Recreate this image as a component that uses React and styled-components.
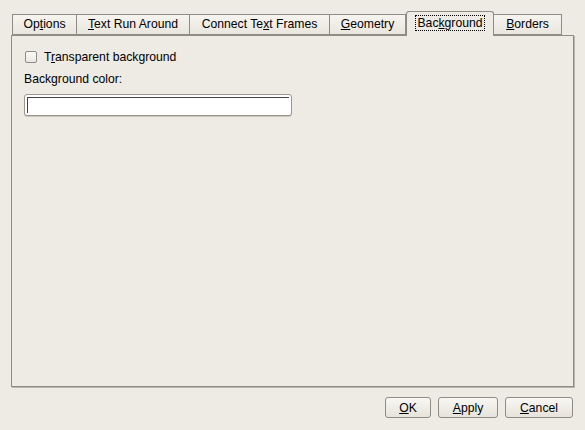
import React from 'react';
import styled, { createGlobalStyle } from 'styled-components';

const GlobalStyle = createGlobalStyle`
	html, body {
		margin: 0;
		padding: 0;
		background: #edebe4;
	}
	body {
		font-family: "Liberation Sans", Arial, sans-serif;
		font-size: 12px;
		color: #000;
	}
`;

const Dialog = styled.div`
	width: 585px;
	height: 430px;
	box-sizing: border-box;
	padding-top: 11px;
	display: flex;
	flex-direction: column;
	background: #edebe4;
`;

const TabBar = styled.div`
	display: flex;
	align-items: flex-end;
	height: 24px;
	padding-left: 12px;
	position: relative;
	z-index: 1;
`;

const Tab = styled.div`
	box-sizing: border-box;
	width: ${p => p.$w}px;
	height: ${p => (p.$active ? 25 : 21)}px;
	margin-bottom: ${p => (p.$active ? -1 : 0)}px;
	border: 1px solid #8f8c86;
	border-bottom: ${p => (p.$active ? 'none' : '1px solid #8f8c86')};
	border-left-width: ${p => (p.$first || p.$active ? 1 : 0)}px;
	border-radius: ${p => (p.$active ? '3px 3px 0 0' : '0')};
	background: ${p =>
		p.$active
			? '#edebe4'
			: 'linear-gradient(#f6f4ef, #e9e6de)'};
	display: flex;
	align-items: flex-start;
	justify-content: center;
	padding-top: ${p => (p.$active ? 3 : 1)}px;
	font-size: 12.2px;
	white-space: nowrap;
`;

const Focus = styled.span`
	border: 1px dotted #000;
	padding: 0 1px;
	line-height: 14px;
`;

const Label = styled.span`
	line-height: 16px;
`;

const Panel = styled.div`
	margin-left: 11px;
	width: 563px;
	height: 352px;
	box-sizing: border-box;
	border: 1px solid #8f8c86;
	box-shadow: 1px 1px 0 #b8b5ae;
	padding: 13px 12px 0 12px;
	display: flex;
	flex-direction: column;
	font-size: 12.2px;
`;

const CheckRow = styled.label`
	display: flex;
	align-items: center;
	gap: 7px;
	height: 16px;
	margin-left: 1px;
`;

const CheckBox = styled.span`
	box-sizing: border-box;
	width: 12px;
	height: 12px;
	border: 1px solid #8f8c86;
	border-radius: 2px;
	background: linear-gradient(#fbfaf8, #e9e7e1);
`;

const FieldLabel = styled.div`
	margin-top: 6px;
	line-height: 16px;
`;

const ColorInput = styled.div`
	margin-top: 7px;
	width: 268px;
	height: 22px;
	box-sizing: border-box;
	border: 1px solid #9a968f;
	border-radius: 3px;
	background: #fff;
	padding: 2px;
	box-shadow: 0 1px 0 #c9c6bf;
	& > div {
		height: 100%;
		box-sizing: border-box;
		border-top: 1px solid #45433f;
		border-left: 1px solid #45433f;
	}
`;

const ButtonRow = styled.div`
	display: flex;
	justify-content: flex-end;
	gap: 7px;
	margin-top: 10px;
	padding-right: 12px;
`;

const Button = styled.button`
	width: ${p => p.$w}px;
	height: 21px;
	box-sizing: border-box;
	border: 1px solid #8f8c86;
	border-radius: 3px;
	background: linear-gradient(#f8f7f3, #e6e3db);
	font-family: "Liberation Sans", Arial, sans-serif;
	font-size: 12.2px;
	color: #000;
	padding: 0;
`;

const U = styled.u`
	text-decoration: underline;
	text-underline-offset: 1px;
`;

const tabs = [
	{ w: 65, pre: 'Op', key: 't', post: 'ions' },
	{ w: 113, pre: '', key: 'T', post: 'ext Run Around' },
	{ w: 140, pre: 'Connect Te', key: 'x', post: 't Frames' },
	{ w: 76, pre: '', key: 'G', post: 'eometry' },
	{ w: 88, pre: 'Bac', key: 'k', post: 'ground', active: true },
	{ w: 68, pre: '', key: 'B', post: 'orders' },
];

export default function App() {
	return (
		<>
			<GlobalStyle />
			<Dialog>
				<TabBar>
					{tabs.map((t, i) => (
						<Tab key={i} $w={t.w} $active={t.active} $first={i === 0}>
							{t.active ? (
								<Focus>
									{t.pre}
									<U>{t.key}</U>
									{t.post}
								</Focus>
							) : (
								<Label>
									{t.pre}
									<U>{t.key}</U>
									{t.post}
								</Label>
							)}
						</Tab>
					))}
				</TabBar>
				<Panel>
					<CheckRow>
						<CheckBox />
						<span>
							T<U>r</U>ansparent background
						</span>
					</CheckRow>
					<FieldLabel>Background color:</FieldLabel>
					<ColorInput>
						<div />
					</ColorInput>
				</Panel>
				<ButtonRow>
					<Button $w={46}>
						<U>O</U>K
					</Button>
					<Button $w={60}>
						<U>A</U>pply
					</Button>
					<Button $w={68}>
						<U>C</U>ancel
					</Button>
				</ButtonRow>
			</Dialog>
		</>
	);
}
